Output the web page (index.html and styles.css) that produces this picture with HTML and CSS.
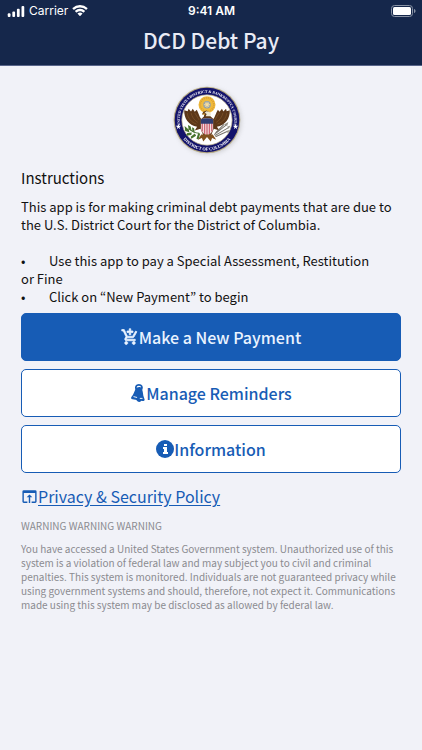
FILE: index.html
```html
<!DOCTYPE html>
<html lang="en">
<head>
<meta charset="utf-8">
<meta name="viewport" content="width=device-width, initial-scale=1">
<title>DCD Debt Pay</title>
<link rel="stylesheet" href="styles.css">
</head>
<body>
<header class="header">
  <div class="status">
    <div class="status-left">
      <svg class="signal" viewBox="0 0 18 12" aria-hidden="true"><rect x="0" y="8" width="3" height="4" rx="1"/><rect x="5" y="6" width="3" height="6" rx="1"/><rect x="10" y="3" width="3" height="9" rx="1"/><rect x="15" y="0" width="3" height="12" rx="1"/></svg>
      <span>Carrier</span>
      <svg class="wifi" viewBox="0 0 16 12" aria-hidden="true"><path d="M8 2.4c2.2 0 4.300.85 5.900 2.350.12.110.32.110.44 0l1.150-1.200a.33.330 0 0 0 0-.47 10.800 10.800 0 0 0-15 0 .33.330 0 0 0 0 .47l1.150 1.200c.12.110.32.110.44 0A8.600 8.600 0 0 1 8 2.400zm0 3.800c1.200 0 2.400.45 3.300 1.260.12.110.32.110.44 0l1.150-1.200a.33.330 0 0 0 0-.47 7.100 7.100 0 0 0-9.800 0 .33.330 0 0 0 0 .47l1.150 1.200c.12.110.32.110.44 0A4.900 4.900 0 0 1 8 6.200zm2.300 2.650a.33.330 0 0 0 0-.48 3.600 3.600 0 0 0-4.600 0 .33.330 0 0 0 0 .48l2.050 2.100c.14.140.36.140.5 0z"/></svg>
    </div>
    <div class="status-time">9:41 AM</div>
    <svg class="battery" viewBox="0 0 25 12" aria-hidden="true"><rect class="battery-case" x=".5" y=".5" width="21" height="11" rx="3"/><rect x="2" y="2" width="18" height="8" rx="1.500"/><path class="battery-tip" d="M23 4v4c1-.4 1.500-1 1.500-2S24 4.400 23 4z"/></svg>
  </div>
  <h1 class="title">DCD Debt Pay</h1>
</header>
<main class="content">
  <svg class="seal" viewBox="0 0 200 200" role="img" aria-label="Court seal">
    <defs>
      <path id="arc-top" d="M24 125A80 80 0 1 1 176 125"/>
      <path id="arc-bottom" d="M24 147A89 89 0 0 0 176 147"/>
    </defs>
    <circle cx="100" cy="100" r="98" fill="#b5a982"/>
    <circle cx="100" cy="100" r="95" fill="#13136b"/>
    <circle cx="100" cy="100" r="74" fill="#fff" stroke="#b5a982" stroke-width="2"/>
    <text class="seal-text seal-text-top"><textPath href="#arc-top" startOffset="50%">UNITED STATES DISTRICT &amp; BANKRUPTCY COURTS</textPath></text>
    <text class="seal-text seal-text-bottom"><textPath href="#arc-bottom" startOffset="50%">DISTRICT OF COLUMBIA</textPath></text>
    <g fill="#fff"><path d="M16 112l2 5 6 0-5 4 2 6-5-4-5 4 2-6-5-4 6 0z"/><path d="M184 112l2 5 6 0-5 4 2 6-5-4-5 4 2-6-5-4 6 0z"/></g>
    <circle cx="100" cy="55" r="25" fill="#f0bb3c"/>
    <circle cx="100" cy="55" r="20" fill="none" stroke="#d99d32" stroke-width="5" stroke-dasharray="3 3"/>
    <circle cx="100" cy="55" r="11" fill="#8d9fae"/>
    <path d="M100 46v18M91 55h18M94 49l12 12M106 49L94 61" stroke="#f5dda0" stroke-width="3"/>
    <path d="M33 71c-1 24 13 44 38 49l-7 11 17-5 10 24h19l10-24 17 5-8-11c25-5 39-25 38-49l-9 3-2-7-8 8-4-8-7 9-5-6c-6 9-8 21-13 27l-10-9-1-10-9-6-10 4-4 8 7-1-1 7-8 7c-6-7-8-18-13-27l-6 6-6-9-5 8-7-8-3 7z" fill="#5c3719"/>
    <path d="M42 80c2 15 12 27 27 32M53 79c3 12 9 21 20 28M64 79l13 21M158 80c-2 15-12 27-27 32M147 79c-3 12-9 21-20 28M136 79l-13 21" fill="none" stroke="#80562b" stroke-width="2"/>
    <path d="M93 79l5-5 9 2 5 6-3 7H96l3-7z" fill="#eee7d2"/>
    <path d="M94 80l-8 2 7 3z" fill="#dc9d22"/>
    <path d="M82 98q18-6 36 0v26q-2 15-18 22-16-7-18-22z" fill="#f6e7e8"/>
    <path d="M86 109v25M93 109v32M100 109v37M107 109v32M114 109v25" stroke="#ce6676" stroke-width="4"/>
    <path d="M82 98q18-6 36 0v13H82z" fill="#303c72"/>
    <path d="M83 143l-10 15 12-5 4 10 11-13 11 13 4-10 12 5-10-15z" fill="#81511f"/>
    <path d="M77 139c-12 0-20-3-30-14" fill="none" stroke="#3d692a" stroke-width="3"/>
    <path d="M47 129l-13-11 2 14 12 4zm8 4l-3-14-8-4 2 12zm0 4l-13 1-4 8 16-2zm9 0l-2-13-6-3 1 13zm0 3l-12 9 2 6 14-9zm10-1l-5 16 6 2 5-17z" fill="#48742e"/>
    <path d="M121 143l35-28M123 146l39-23M125 149l34-15M125 138l25-25" stroke="#77736b" stroke-width="3"/>
    <path d="M150 113l13-7-4 12zm9 7l10-4-5 10zm-2 12l11-3-7 9z" fill="#969389"/>
  </svg>
  <h2 class="heading">Instructions</h2>
  <p class="intro">This app is for making criminal debt payments that are due to the U.S. District Court for the District of Columbia.</p>
  <ul class="steps">
    <li><span class="bullet">•</span>Use this app to pay a Special Assessment, Restitution or Fine</li>
    <li><span class="bullet">•</span>Click on “New Payment” to begin</li>
  </ul>
  <div class="actions">
    <button type="button" class="btn btn-primary">
      <svg class="icon icon-cart" viewBox="0 0 24 24" aria-hidden="true"><path d="M11 9h2V6h3V4h-3V1h-2v3H8v2h3v3zm-4 9c-1.100 0-2 .9-2 2s.9 2 2 2 2-.9 2-2-.9-2-2-2zm10 0c-1.100 0-2 .9-2 2s.9 2 2 2 2-.9 2-2-.9-2-2-2zm-9.800-3.200c0-.1 0-.1.100-.2l.9-1.600h7.400c.7 0 1.400-.4 1.700-1l3.900-7-1.700-1-3.900 7h-7L4.300 2H1v2h2l3.600 7.600L5.200 14c-.1.300-.2.600-.2 1 0 1.100.9 2 2 2h12v-2H7.400c-.1 0-.2-.1-.2-.2z"/></svg>Make a New Payment
    </button>
    <button type="button" class="btn">
      <svg class="icon icon-bell" viewBox="0 0 16 20" aria-hidden="true"><path class="bell-ring" d="M6 6C5 3 6 1 9 1s4 2 3 5"/><path d="M7 4c2-1 4-1 5 1 2 3 1 7 3 11 1 2 0 3-2 3L2 17c-2 0-2-2-1-3C4 11 4 6 7 4z"/><path d="M6 17h6c0 4-5 4-6 0z"/><path class="bell-cut" d="M3 14l4 1M10 16l3 0"/></svg>Manage Reminders
    </button>
    <button type="button" class="btn">
      <svg class="icon" viewBox="0 0 18 18" aria-hidden="true"><circle cx="9" cy="9" r="9"/><path class="info-mark" d="M8 4h3v2H8zM7 7h4v5h1v2H7v-2h1V9H7z"/></svg>Information
    </button>
  </div>
  <a class="policy" href="#"><svg class="icon-open" viewBox="0 0 24 24" aria-hidden="true"><path d="M20 3H4a2 2 0 0 0-2 2v14c0 1.100.9 2 2 2h5v-2H4V7h16v12h-5v2h5c1.100 0 2-.9 2-2V5a2 2 0 0 0-2-2zm-8 6l-4 4h3v8h2v-8h3z"/></svg><span>Privacy &amp; Security Policy</span></a>
  <h3 class="warning-title">WARNING WARNING WARNING</h3>
  <p class="warning">You have accessed a United States Government system. Unauthorized use of this system is a violation of federal law and may subject you to civil and criminal penalties. This system is monitored. Individuals are not guaranteed privacy while using government systems and should, therefore, not expect it. Communications made using this system may be disclosed as allowed by federal law.</p>
</main>
</body>
</html>
```
FILE: styles.css
```css
* { box-sizing: border-box; }
body {
  margin: 0;
  min-height: 100vh;
  background: #f1f2f8;
  color: #111;
  font-family: "Noto Sans CJK KR", "Noto Sans", sans-serif;
}
h1, h2, h3, p, ul { margin: 0; padding: 0; }
ul { list-style: none; }
.header {
  background: #15274b;
  color: #e9ebf5;
  border-bottom: 1px solid #58658a;
}
.status {
  display: grid;
  grid-template-columns: 1fr auto 1fr;
  align-items: center;
  height: 22px;
  padding: 0 6px 0 7px;
  color: #fff;
  font: 12px/20px Inter, sans-serif;
}
.status svg { fill: #fff; }
.status-left { display: flex; align-items: center; gap: 4px; }
.signal { width: 18px; height: 11px; }
.wifi { width: 16px; height: 12px; }
.status-time { font-weight: 600; }
.battery { width: 25px; height: 12px; justify-self: end; }
.battery .battery-case { fill: none; stroke: #8993a5; }
.battery .battery-tip { fill: #8993a5; }
.title {
  padding-bottom: 7px;
  text-align: center;
  font-size: 21px;
  font-weight: 500;
  line-height: 36px;
}
.content { padding: 20px 21px; }
.seal {
  display: block;
  width: 76px;
  height: 68px;
  margin: 0 auto;
  padding-right: 8px;
  filter: drop-shadow(1px 1px 2px #9996);
}
.seal-text { fill: #fff; font-family: "Liberation Serif", serif; font-weight: 700; text-anchor: middle; }
.seal-text-top { font-size: 11px; }
.seal-text-bottom { font-size: 13px; }
.heading { margin-top: 12px; font-size: 15px; font-weight: 400; line-height: 24px; }
.intro, .steps { font-size: 13px; line-height: 18px; }
.intro { margin-top: 8px; }
.steps { margin-top: 18px; padding-right: 20px; }
.bullet { display: inline-block; width: 28px; }
.actions { display: grid; gap: 8px; margin-top: 7px; }
.btn {
  display: flex;
  align-items: center;
  justify-content: center;
  height: 48px;
  padding: 0 12px;
  border: 1px solid #175cb5;
  border-radius: 5px;
  background: #fff;
  color: #175cb5;
  font-family: inherit;
  font-size: 16px;
  font-weight: 500;
}
.btn-primary { background: #175cb5; color: #eaf3ff; }
.icon { width: 18px; height: 18px; fill: currentColor; }
.icon-cart { stroke: currentColor; stroke-width: 1; }
.icon-bell { width: 16px; }
.bell-ring { fill: none; stroke: currentColor; stroke-width: 2; }
.bell-cut { fill: none; stroke: #fff; stroke-width: 1; }
.info-mark { fill: #fff; }
.policy { display: flex; align-items: center; margin-top: 11px; color: #175cb5; font-size: 16px; line-height: 24px; text-decoration: none; }
.policy span { text-decoration: underline; text-underline-offset: 2px; }
.icon-open { width: 17px; height: 17px; fill: currentColor; }
.warning-title, .warning { color: #8b8b90; font-size: 10px; font-weight: 400; }
.warning-title { margin-top: 9px; line-height: 18px; }
.warning { margin-top: 7px; line-height: 14px; }
```
